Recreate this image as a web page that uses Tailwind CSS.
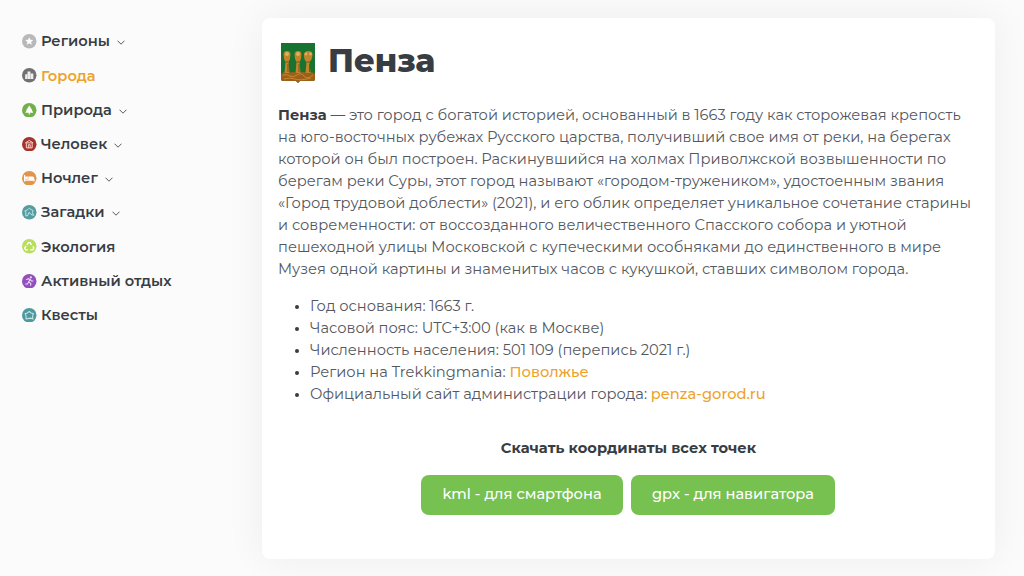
<!DOCTYPE html>
<html lang="ru">
<head>
    <meta charset="UTF-8">
    <meta name="viewport" content="width=device-width, initial-scale=1.0">
    <title>Пенза</title>
    <script src="https://cdn.jsdelivr.net/npm/@tailwindcss/browser@4"></script>
</head>
<body class="bg-[#fbfbfb] text-[#383d44] font-['Montserrat','Inter',sans-serif] h-[576px] overflow-hidden">
    <div class="flex h-full">
        <!-- Sidebar menu -->
        <nav class="w-[262px] shrink-0 pl-[22px] pt-[24.4px] text-[14.67px] font-semibold">
            <ul class="whitespace-nowrap">
                <li class="flex items-center h-[34.2px]">
                    <svg class="w-[14.5px] h-[14.5px] mr-[4.5px]" viewBox="0 0 16 16"><circle cx="8" cy="8" r="8" fill="#b9b9b9"/><path d="M8 3.500l1.300 2.900 3.100.3-2.400 2 .8 3.100L8 10.200l-2.800 1.600.8-3.100-2.400-2 3.100-.3z" fill="#fff"/></svg>
                    <span>Регионы</span>
                    <svg class="w-2 h-[5px] ml-[7px] mt-[3px]" viewBox="0 0 8 5" fill="none" stroke="#555a60"><path d="M.5.7L4 4.200 7.500.7"/></svg>
                </li>
                <li class="flex items-center h-[34.2px] text-[#eda32b]">
                    <svg class="w-[14.5px] h-[14.5px] mr-[4.5px]" viewBox="0 0 16 16"><circle cx="8" cy="8" r="8" fill="#717174"/><path d="M3.500 12V7h2.600V3.800h3.200V6h3.200v6z" fill="#eee"/><path d="M6.100 7v5M9.300 6v6" stroke="#a5a5a7" stroke-width=".6"/></svg>
                    <span>Города</span>
                </li>
                <li class="flex items-center h-[34.2px]">
                    <svg class="w-[14.5px] h-[14.5px] mr-[4.5px]" viewBox="0 0 16 16"><circle cx="8" cy="8" r="8" fill="#74b04a"/><path d="M8 2.800l2.500 3.700 1.800 4.300H8.600v2H7.400v-2H3.700l1.800-4.300z" fill="#fff"/></svg>
                    <span>Природа</span>
                    <svg class="w-2 h-[5px] ml-[7px] mt-[3px]" viewBox="0 0 8 5" fill="none" stroke="#555a60"><path d="M.5.7L4 4.200 7.500.7"/></svg>
                </li>
                <li class="flex items-center h-[34.2px]">
                    <svg class="w-[14.5px] h-[14.5px] mr-[4.5px]" viewBox="0 0 16 16"><circle cx="8" cy="8" r="8" fill="#a8322a"/><path d="M3.800 6.500L8 3.800l4.200 2.700zM4.800 7v5h6.400V7M7 12V8.500h2V12" fill="none" stroke="#f6d5d0" stroke-width="1.100"/></svg>
                    <span>Человек</span>
                    <svg class="w-2 h-[5px] ml-[7px] mt-[3px]" viewBox="0 0 8 5" fill="none" stroke="#555a60"><path d="M.5.7L4 4.200 7.500.7"/></svg>
                </li>
                <li class="flex items-center h-[34.2px]">
                    <svg class="w-[14.5px] h-[14.5px] mr-[4.5px]" viewBox="0 0 16 16"><circle cx="8" cy="8" r="8" fill="#e2954a"/><path d="M2.800 4.500v7M2.800 10h10.400v1.500" fill="none" stroke="#fff" stroke-width="1.300"/><path d="M3.500 6.200h3V9h-3zM7 6h4.500q2 0 2 2v2H7z" fill="#fff"/></svg>
                    <span>Ночлег</span>
                    <svg class="w-2 h-[5px] ml-[7px] mt-[3px]" viewBox="0 0 8 5" fill="none" stroke="#555a60"><path d="M.5.7L4 4.200 7.500.7"/></svg>
                </li>
                <li class="flex items-center h-[34.2px]">
                    <svg class="w-[14.5px] h-[14.5px] mr-[4.5px]" viewBox="0 0 16 16"><circle cx="8" cy="8" r="8" fill="#559da0"/><path d="M4.200 12V7.500L3 6.800 6.500 5 8 3.500l2 1.500 2.300 1.200L11.500 8l1.300 3.500-3-1.200L8 8 6 12z" fill="none" stroke="#bfe5e6" stroke-width="1.100"/></svg>
                    <span>Загадки</span>
                    <svg class="w-2 h-[5px] ml-[7px] mt-[3px]" viewBox="0 0 8 5" fill="none" stroke="#555a60"><path d="M.5.7L4 4.200 7.500.7"/></svg>
                </li>
                <li class="flex items-center h-[34.2px]">
                    <svg class="w-[14.5px] h-[14.5px] mr-[4.5px]" viewBox="0 0 16 16"><circle cx="8" cy="8" r="8" fill="#b9de5c"/><path d="M5.500 6.500L7 4h2l1.500 2.500M12 8l1 2-1 2H9M6.500 12H4L3 10l1.500-2.500" fill="none" stroke="#fff" stroke-width="1.500"/></svg>
                    <span>Экология</span>
                </li>
                <li class="flex items-center h-[34.2px]">
                    <svg class="w-[14.5px] h-[14.5px] mr-[4.5px]" viewBox="0 0 16 16"><circle cx="8" cy="8" r="8" fill="#9150bd"/><circle cx="9.800" cy="3.700" r="1.200" fill="#f0dcfa"/><path d="M4.500 6.500L7 5.200l2 .8-1.800 3 2.500 1.300L9.500 13M7.200 9L6 11H3.500M9 6l1.500 1.800h2" fill="none" stroke="#f0dcfa" stroke-width="1.200"/></svg>
                    <span>Активный отдых</span>
                </li>
                <li class="flex items-center h-[34.2px]">
                    <svg class="w-[14.5px] h-[14.5px] mr-[4.5px]" viewBox="0 0 16 16"><circle cx="8" cy="8" r="8" fill="#4f999d"/><path d="M4.500 12V9L3.500 6.200 6 5.500 8 3.800l2 1.700 2.500.7L11.700 8.500 12 12l-2.500-.8z" fill="none" stroke="#bfe5e6" stroke-width="1.200"/></svg>
                    <span>Квесты</span>
                </li>
            </ul>
        </nav>

        <!-- City card -->
        <main class="w-[733px] h-[541px] mt-[18px] px-4 bg-white rounded-lg shadow-[0_0_40px_rgba(0,0,0,0.06)]">
            <div class="flex items-center pt-[25px] h-[64px]">
                <!-- Coat of arms -->
                <svg class="w-[34px] h-[40px] ml-[3px] mr-[13px]" viewBox="0 0 34 40">
                    <path d="M0 0h34v36q0 2-2 2H19l-2 2-2-2H2q-2 0-2-2z" fill="#187331"/>
                    <path d="M0 31l3-2 4 1 5-1 5 1 5-1 6 1 3-1 3 2v5q0 2-2 2H19l-2 2-2-2H2q-2 0-2-2z" fill="#9c601a"/>
                    <path d="M2 32q4-1 7 1t7-1 7 1 9-1M3 36q6-2 11 0t16-1" fill="none" stroke="#c9862f"/>
                    <g fill="#c4842b">
                        <path d="M2.500 11Q3 8 6 8t3.500 3q0 5-2 8L8.500 30h-5l1-11q-2-3-2-8z"/>
                        <path d="M13.500 11q.5-3 3.500-3t3.500 3q0 5-2 8l1 11h-5l1-11q-2-3-2-8z"/>
                        <path d="M23 11q1-3 4.500-3t4 3q0 5-3 8l1 11h-5l1-11q-3-3-2.500-8z"/>
                    </g>
                    <g fill="#e0b060">
                        <circle cx="6" cy="11" r="2"/>
                        <circle cx="17" cy="11" r="2"/>
                        <circle cx="25" cy="11" r="1.400"/>
                        <circle cx="29.500" cy="11" r="1.400"/>
                    </g>
                    <path d="M4.500 19h3M15.500 19h3M26 19h3M7 21v8M18 21v8M28.500 21v8" stroke="#855012"/>
                </svg>
                <h1 class="text-[32.1px] font-extrabold leading-none relative top-[-1.5px]">Пенза</h1>
            </div>

            <div class="mt-[22.4px] text-[14.67px] leading-[22px] text-[#54585e] whitespace-nowrap">
                <p>
                    <b class="font-bold text-[#383d44]">Пенза</b> — это город с богатой историей, основанный в 1663 году как сторожевая крепость<br>
                    на юго-восточных рубежах Русского царства, получивший свое имя от реки, на берегах<br>
                    которой он был построен. Раскинувшийся на холмах Приволжской возвышенности по<br>
                    берегам реки Суры, этот город называют «городом-тружеником», удостоенным звания<br>
                    «Город трудовой доблести» (2021), и его облик определяет уникальное сочетание старины<br>
                    и современности: от воссозданного величественного Спасского собора и уютной<br>
                    пешеходной улицы Московской с купеческими особняками до единственного в мире<br>
                    Музея одной картины и знаменитых часов с кукушкой, ставших символом города.
                </p>
                <ul class="list-disc pl-8 mt-[15px] marker:text-[12px] marker:text-[#383d44]">
                    <li>Год основания: 1663 г.</li>
                    <li>Часовой пояс: UTC+3:00 (как в Москве)</li>
                    <li>Численность населения: 501 109 (перепись 2021 г.)</li>
                    <li>Регион на Trekkingmania: <a class="font-medium text-[#eda32b]">Поволжье</a></li>
                    <li>Официальный сайт администрации города: <a class="font-medium text-[#eda32b]">penza-gorod.ru</a></li>
                </ul>
            </div>

            <!-- Downloads -->
            <div class="mt-[32px] text-center text-[14.67px] leading-[22px]">
                <p class="font-bold">Скачать координаты всех точек</p>
                <div class="mt-[15.6px] pr-[1px] flex justify-center gap-2 font-medium text-white">
                    <a class="w-[202px] h-10 leading-[39px] rounded-lg bg-[#76c14f]">kml - для смартфона</a>
                    <a class="w-[204px] h-10 leading-[39px] rounded-lg bg-[#76c14f]">gpx - для навигатора</a>
                </div>
            </div>
        </main>
    </div>
</body>
</html>
